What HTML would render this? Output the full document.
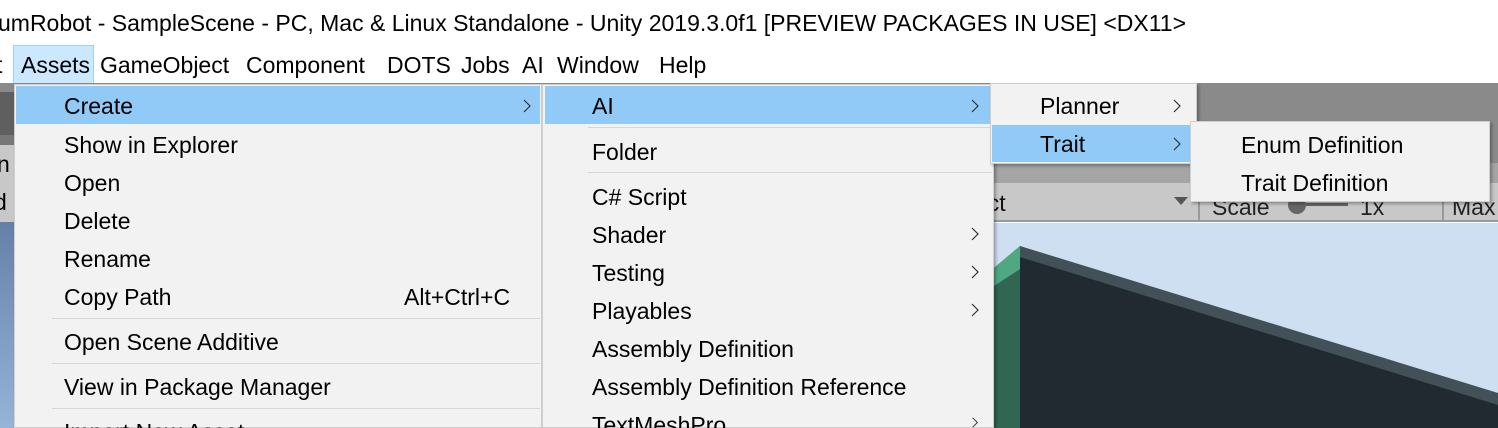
<!DOCTYPE html>
<html><head><meta charset="utf-8"><style>
*{margin:0;padding:0;box-sizing:border-box}
html,body{width:1498px;height:428px;overflow:hidden}
body{position:relative;background:#fff;font-family:"Liberation Sans",sans-serif;color:#000}
.a{position:absolute}
.t{position:absolute;font-size:23px;line-height:38px;white-space:nowrap}
.hl{position:absolute;background:#91c9f7}
.sep{position:absolute;height:1px;background:#d7d7d7}
.ar{position:absolute;width:8px;height:14px}
.menu{position:absolute;background:#f2f2f2;border:1px solid #cfcfcf;box-shadow:2px 2px 3px rgba(0,0,0,.3)}
.clip{overflow:hidden}
</style></head><body>
<div class="t" style="left:-2px;top:4px;font-size:23px">umRobot - SampleScene - PC, Mac &amp; Linux Standalone - Unity 2019.3.0f1 [PREVIEW PACKAGES IN USE] &lt;DX11&gt;</div>
<div class="a" style="left:13px;top:45px;width:81px;height:39px;background:#cce8ff;border:1px solid #99d1ff"></div>
<div class="t" style="left:-4px;top:46px">t</div>
<div class="t" style="left:21px;top:46px">Assets</div>
<div class="t" style="left:100px;top:46px">GameObject</div>
<div class="t" style="left:246px;top:46px">Component</div>
<div class="t" style="left:387px;top:46px">DOTS</div>
<div class="t" style="left:461px;top:46px">Jobs</div>
<div class="t" style="left:522px;top:46px">AI</div>
<div class="t" style="left:557px;top:46px">Window</div>
<div class="t" style="left:659px;top:46px">Help</div>

<div class="a" style="left:0;top:83px;width:1498px;height:80px;background:#8a8a8a"></div>
<div class="a" style="left:0;top:163px;width:1498px;height:20px;background:#a5a5a5"></div>
<div class="a" style="left:0;top:92px;width:14px;height:43px;background:#5f5f5f"></div>
<div class="a" style="left:0;top:135px;width:14px;height:10px;background:#777"></div>
<div class="a" style="left:0;top:145px;width:14px;height:77px;background:#c8c8c8"></div>
<div class="a" style="left:0;top:222px;width:14px;height:206px;background:linear-gradient(#6580a8,#95b4d8)"></div>
<div class="t" style="left:-3px;top:145px">n</div>
<div class="t" style="left:-6px;top:183px">d</div>
<div class="a" style="left:990px;top:183px;width:508px;height:39px;background:#c8c8c8;border-bottom:2px solid #999"></div>
<div class="a" style="left:1198px;top:183px;width:2px;height:39px;background:#999"></div>
<div class="a" style="left:1442px;top:183px;width:2px;height:39px;background:#999"></div>
<div class="t" style="left:975px;top:184px;color:#111">ect</div>
<div class="a" style="left:1174px;top:197px;width:0;height:0;border-left:7px solid transparent;border-right:7px solid transparent;border-top:8px solid #555"></div>
<div class="t" style="left:1212px;top:188px;color:#222">Scale</div>
<div class="a" style="left:1288px;top:196px;width:18px;height:18px;border-radius:50%;background:#666"></div>
<div class="a" style="left:1306px;top:203px;width:42px;height:3px;background:#666"></div>
<div class="t" style="left:1360px;top:188px;color:#222">1x</div>
<div class="t" style="left:1452px;top:188px;color:#222">Max</div>
<div class="a" style="left:994px;top:223px;width:504px;height:205px;background:#cfdff2"></div>
<svg class="a" style="left:994px;top:223px" width="504" height="205">
<polygon points="0,45 26,23 26,205 0,205" fill="#316652"/>
<polygon points="0,45 26,23 48,32 26,46 0,63" fill="#4fa882"/>
<polygon points="26,23 504,170 504,205 26,205" fill="#425157"/>
<polygon points="26,34 504,182 504,205 26,205" fill="#222a31"/>
</svg>

<svg width="0" height="0" style="position:absolute"><defs><symbol id="ch" viewBox="0 0 8 14"><polyline points="1,1 7,7 1,13" fill="none" stroke="#333" stroke-width="1.2"/></symbol></defs></svg>

<div class="menu" style="left:14px;top:84px;width:528px;height:344px"></div>
<div class="hl" style="left:16px;top:86px;width:524px;height:38px"></div>
<div class="t" style="left:64px;top:87px">Create</div><svg class="ar" style="left:523px;top:99px"><use href="#ch"/></svg>
<div class="t" style="left:64px;top:126px">Show in Explorer</div>
<div class="t" style="left:64px;top:164px">Open</div>
<div class="t" style="left:64px;top:202px">Delete</div>
<div class="t" style="left:64px;top:240px">Rename</div>
<div class="t" style="left:64px;top:278px">Copy Path</div>
<div class="t" style="left:404px;top:278px">Alt+Ctrl+C</div>
<div class="sep" style="left:52px;top:318px;width:488px"></div>
<div class="t" style="left:64px;top:323px">Open Scene Additive</div>
<div class="sep" style="left:52px;top:363px;width:488px"></div>
<div class="t" style="left:64px;top:368px">View in Package Manager</div>
<div class="sep" style="left:52px;top:408px;width:488px"></div>
<div class="t clip" style="left:64px;top:413px;height:15px">Import New Asset...</div>

<div class="menu" style="left:542px;top:84px;width:452px;height:344px"></div>
<div class="hl" style="left:545px;top:86px;width:447px;height:38px"></div>
<div class="t" style="left:592px;top:87px">AI</div><svg class="ar" style="left:971px;top:99px"><use href="#ch"/></svg>
<div class="sep" style="left:588px;top:127px;width:404px"></div>
<div class="t" style="left:592px;top:133px">Folder</div>
<div class="sep" style="left:588px;top:172px;width:404px"></div>
<div class="t" style="left:592px;top:178px">C# Script</div>
<div class="t" style="left:592px;top:216px">Shader</div><svg class="ar" style="left:971px;top:227px"><use href="#ch"/></svg>
<div class="t" style="left:592px;top:254px">Testing</div><svg class="ar" style="left:971px;top:265px"><use href="#ch"/></svg>
<div class="t" style="left:592px;top:292px">Playables</div><svg class="ar" style="left:971px;top:303px"><use href="#ch"/></svg>
<div class="t" style="left:592px;top:330px">Assembly Definition</div>
<div class="t" style="left:592px;top:368px">Assembly Definition Reference</div>
<div class="t clip" style="left:592px;top:406px;height:22px">TextMeshPro</div><svg class="ar" style="left:971px;top:417px;height:11px"><use href="#ch"/></svg>

<div class="menu" style="left:990px;top:83px;width:207px;height:81px"></div>
<div class="hl" style="left:992px;top:125px;width:202px;height:37px"></div>
<div class="t" style="left:1040px;top:87px">Planner</div><svg class="ar" style="left:1173px;top:99px"><use href="#ch"/></svg>
<div class="t" style="left:1040px;top:125px">Trait</div><svg class="ar" style="left:1173px;top:137px"><use href="#ch"/></svg>

<div class="menu" style="left:1190px;top:121px;width:300px;height:81px"></div>
<div class="t" style="left:1241px;top:126px">Enum Definition</div>
<div class="t" style="left:1241px;top:164px">Trait Definition</div>
</body></html>
